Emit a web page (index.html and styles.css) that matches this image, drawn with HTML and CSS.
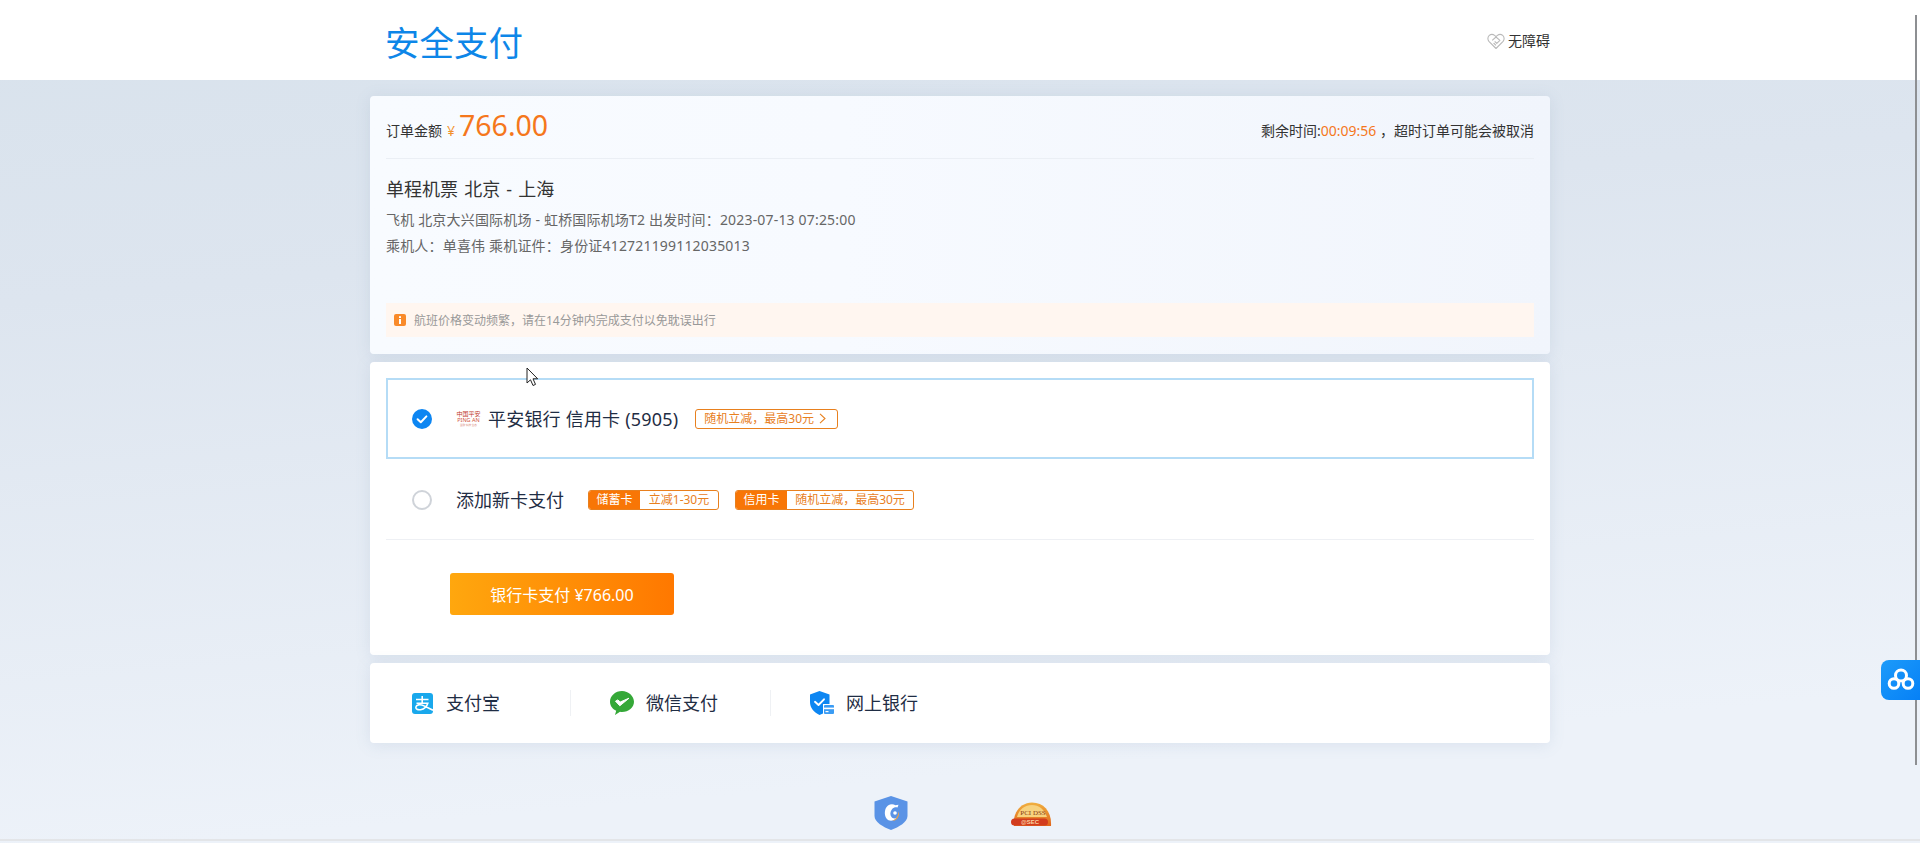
FILE: index.html
```html
<!DOCTYPE html>
<html lang="zh-CN">
<head>
<meta charset="utf-8">
<title>安全支付</title>
<link rel="stylesheet" href="styles.css">
</head>
<body>
<header class="top">
  <div class="top-inner">
    <h1 class="brand">安全支付</h1>
    <a class="a11y">
      <svg class="a11y-icon" viewBox="0 0 18 18" fill="none" stroke="#b9b9b9" stroke-width="1.1" stroke-linejoin="round">
        <path d="M9 16.5 1.9 9.3C.4 7.6.6 4.9 2.3 3.4 4 2 6.2 2.3 7.6 3.4L9 4.6l1.4-1.2c1.4-1.1 3.6-1.4 5.3 0 1.7 1.5 1.9 4.2.4 5.900L9 16.5Z"/>
        <path d="M5.2 8.3 9 5l3.9 3.3-3.1 3-2.1-2"/>
        <path d="M9 13.4 6.6 11"/>
      </svg>
      <span>无障碍</span>
    </a>
  </div>
</header>

<main class="main">
  <section class="card order">
    <div class="order-head">
      <div class="amount">
        <span class="amount-label">订单金额</span>
        <span class="amount-yen">¥</span>
        <span class="amount-num">766.00</span>
      </div>
      <div class="timer">剩余时间:<span class="timer-num">00:09:56</span> ，超时订单可能会被取消</div>
    </div>
    <div class="order-body">
      <h2 class="order-title">单程机票 北京 - 上海</h2>
      <p class="order-line">飞机 北京大兴国际机场 - 虹桥国际机场T2 出发时间：2023-07-13 07:25:00</p>
      <p class="order-line">乘机人：单喜伟 乘机证件：身份证412721199112035013</p>
    </div>
    <div class="notice">
      <svg class="notice-icon" viewBox="0 0 12 12">
        <rect width="12" height="12" rx="2" fill="#f98a2a"/>
        <rect x="5" y="2.2" width="2" height="1.8" fill="#fff"/>
        <rect x="5" y="5" width="2" height="5" fill="#fff"/>
      </svg>
      <span>航班价格变动频繁，请在14分钟内完成支付以免耽误出行</span>
    </div>
  </section>

  <section class="card pay">
    <div class="pay-row selected">
      <svg class="radio" viewBox="0 0 20 20">
        <circle cx="10" cy="10" r="10" fill="#0d86f2"/>
        <path d="M5.6 10.2 8.8 13.2 14.4 7.4" fill="none" stroke="#fff" stroke-width="2" stroke-linecap="round" stroke-linejoin="round"/>
      </svg>
      <svg class="bank-logo" viewBox="0 0 25 16">
        <text x="12.5" y="5.4" text-anchor="middle" class="logo-cn">中国平安</text>
        <text x="12.5" y="11" text-anchor="middle" class="logo-en">PING AN</text>
        <text x="12.5" y="15" text-anchor="middle" class="logo-sub">金融·科技·生态</text>
      </svg>
      <span class="pay-name pay-name-card">平安银行 信用卡 (5905)</span>
      <span class="tag tag-link">随机立减，最高30元
        <svg class="chev" viewBox="0 0 7 11"><path d="M1 .8 6 5.500 1 10.200" fill="none" stroke="#e8801e" stroke-width="1.100"/></svg>
      </span>
    </div>
    <div class="pay-row add">
      <span class="radio-empty"></span>
      <span class="pay-name">添加新卡支付</span>
      <span class="tag tag-pair"><b class="tag-fill tag-fill-a">储蓄卡</b><span class="tag-text tag-text-a">立减1-30元</span></span>
      <span class="tag tag-pair"><b class="tag-fill tag-fill-b">信用卡</b><span class="tag-text tag-text-b">随机立减，最高30元</span></span>
    </div>
    <div class="pay-action">
      <button class="pay-btn">银行卡支付 ¥766.00</button>
    </div>
  </section>

  <section class="card methods">
    <div class="method first">
      <svg class="m-icon" viewBox="0 0 21 21">
        <rect width="21" height="21" rx="3" fill="#19a8ec"/>
        <path d="M4 6.500H16.500M10.200 3V10M4.500 10.200H15.800C14.800 13.500 12 16 8.600 16.700 5.600 17.200 3.700 16 3.900 14.200 4.200 11.700 8 11 12 12.900L21 17.200" fill="none" stroke="#fff" stroke-width="1.600"/>
      </svg>
      <span>支付宝</span>
    </div>
    <span class="sep"></span>
    <div class="method">
      <svg class="m-icon" viewBox="0 0 24 24">
        <path d="M12 0C5.400 0 0 4.800 0 10.800c0 4 2.500 7.300 6.200 9L5 24l5-3.200c.7.100 1.300.200 2 .200 6.600 0 12-4.700 12-10.200S18.600 0 12 0Z" fill="#35a838"/>
        <path d="M5.500 10.200 9.800 14.800 19 7.200 10.200 11 7.800 8.900Z" fill="#fff" stroke="#fff" stroke-width="1" stroke-linejoin="round"/>
      </svg>
      <span>微信支付</span>
    </div>
    <span class="sep"></span>
    <div class="method">
      <svg class="m-icon" viewBox="0 0 24 24">
        <path d="M9.500 0 19.500 3.500V13H13V22.500L9.500 24C3.500 21 0 16.500 0 11V3.500Z" fill="#0d86f2"/>
        <path d="M5 10.800 8.500 14 14 8.300" fill="none" stroke="#fff" stroke-width="1.900" stroke-linecap="round" stroke-linejoin="round"/>
        <rect x="13" y="13" width="11" height="10" fill="#fff"/>
        <rect x="14" y="14" width="10" height="9" rx="1" fill="#3b9cf4"/>
        <rect x="14" y="16.600" width="10" height="1.600" fill="#fff"/>
        <rect x="15.500" y="20" width="3" height="1.200" fill="#fff"/>
      </svg>
      <span>网上银行</span>
    </div>
  </section>
</main>

<footer class="foot">
  <svg class="foot-shield" viewBox="0 0 34 34">
    <path d="M17 0 33.500 5.500V20C33.500 26 25 31 17 34 9 31 .5 26 .5 20V5.500Z" fill="#5a93e6"/>
    <path d="M14 9.500C16.500 8 19 8 21.500 9.200L24.500 8.800 23.500 11.500C21.500 11 19.500 11.500 18 13.200 16 15.500 15.800 19 17.500 21 19 22.800 21 22.800 22.500 21.500 20 25.500 15 25.800 12.500 22.500 9.800 19 10.500 12 14 9.500Z" fill="#fff"/>
    <path d="M24.800 15.500C26 20.500 22.500 25.500 17.500 25 21.500 24.500 24 20.500 24.800 15.500Z" fill="#f2a13c"/>
    <circle cx="21" cy="17" r="1.800" fill="#fff"/>
  </svg>
  <svg class="foot-pci" viewBox="0 0 41 25">
    <defs>
      <linearGradient id="pciBg" x1="0" y1="0" x2="0" y2="1">
        <stop offset="0" stop-color="#f0b040"/>
        <stop offset="1" stop-color="#e0651c"/>
      </linearGradient>
    </defs>
    <path d="M3 24C1 12 9 .5 21 .5 33 .5 41 10 40 24Z" fill="url(#pciBg)"/>
    <path d="M6 15C8 7 14 3 21 3 28 3 33 7 36 15Z" fill="#f7d27e"/>
    <text x="22" y="12.500" text-anchor="middle" class="pci-a">PCI DSS</text>
    <rect x="0" y="16.500" width="37" height="7" rx="3.500" fill="#d23c1e"/>
    <text x="19" y="22.300" text-anchor="middle" class="pci-b">@SEC</text>
  </svg>
</footer>

<div class="scroll-thumb"></div>
<div class="side-btn">
  <svg viewBox="0 0 28 24" fill="none" stroke="#fff" stroke-width="3">
    <circle cx="14" cy="7.500" r="5.500"/>
    <circle cx="7" cy="15.500" r="4.800"/>
    <circle cx="21" cy="15.500" r="4.800"/>
  </svg>
</div>
<svg class="cursor" viewBox="0 0 13 20">
  <path d="M1 1V16L4.500 12.800 7 18.500 9.500 17.400 7 11.800H11.700Z" fill="#fff" stroke="#222" stroke-width="1"/>
</svg>
</body>
</html>
```

FILE: styles.css
```css
* { box-sizing: border-box; }
html, body { margin: 0; padding: 0; height: 843px; overflow: hidden; }
body {
  position: relative;
  font-family: "Noto Sans", "Noto Sans CJK SC", sans-serif;
  color: #333;
  background: linear-gradient(175deg, #d8e2ec 0%, #dde5ef 30%, #edf2f9 85%);
}

.top { height: 80px; background: #fff; }
.top-inner {
  width: 1180px;
  margin: 0 auto;
  padding: 0 0 0 15px;
  height: 100%;
  display: flex;
  align-items: center;
  justify-content: space-between;
}
.brand { margin: 6px 0 0; font-size: 34.500px; line-height: 44px; font-weight: 400; color: #0d86e8; }
.a11y { display: flex; align-items: center; gap: 3px; font-size: 14px; line-height: 20px; color: #333; margin-top: 1px; }
.a11y-icon { width: 18px; height: 18px; }

.main { width: 1180px; margin: 0 auto; padding-top: 16px; display: flex; flex-direction: column; gap: 8px; }
.card { border-radius: 4px; background: #fff; box-shadow: 0 2px 16px rgba(90, 120, 160, .13); }

.order {
  height: 258px;
  padding: 0 16px;
  background: linear-gradient(90deg, #f8fbff 0%, #f7faff 40%, #f1f5fc 100%);
  display: flex;
  flex-direction: column;
}
.order-head {
  height: 63px;
  flex: none;
  display: flex;
  justify-content: space-between;
  align-items: flex-end;
  padding-bottom: 17px;
  border-bottom: 1px solid #ebeff5;
}
.amount { display: flex; align-items: baseline; }
.amount-label { font-size: 14px; line-height: 20px; }
.amount-yen { font-size: 14px; color: #f2902a; margin: 0 4px 0 5px; line-height: 20px; }
.amount-num { font-size: 28.500px; line-height: 32px; color: #f5771c; }
.timer { font-size: 14px; line-height: 20px; color: #333; }
.timer-num { color: #f5771c; }
.order-body { flex: 1; padding-top: 18px; }
.order-title { margin: 0 0 6px; font-size: 18px; word-spacing: 1.500px; line-height: 24px; font-weight: 400; color: #333; }
.order-line { margin: 0; font-size: 14px; line-height: 26px; color: #666; letter-spacing: .18px; }
.notice {
  flex: none;
  height: 34px;
  margin-bottom: 17px;
  padding: 0 8px;
  display: flex;
  align-items: center;
  gap: 8px;
  background: #fff6f0;
  font-size: 12px;
  color: #999;
}
.notice-icon { width: 12px; height: 12px; }

.pay { height: 293px; padding: 16px 16px 0; }
.pay-row { display: flex; align-items: center; height: 81px; padding-left: 26px; }
.selected { border: 2px solid #b5dcf6; padding-left: 24px; }
.add { height: 79px; margin-top: 2px; border-bottom: 1px solid #eef0f4; }
.radio { width: 20px; height: 20px; flex: none; }
.radio-empty { width: 20px; height: 20px; flex: none; border-radius: 50%; border: 2px solid #cfd3d9; background: #fff; margin-right: 24px; }
.bank-logo { width: 25px; height: 16px; margin: 0 7px 0 24px; flex: none; }
.logo-cn { font-size: 6px; fill: #c0392b; }
.logo-en { font-size: 5.500px; fill: #d0553f; }
.logo-sub { font-size: 2.600px; fill: #d98a7c; }
.pay-name { font-size: 18px; line-height: 24px; color: #1f2d44; }
.pay-name-card { letter-spacing: .2px; }
.tag { font-size: 12px; line-height: 18px; color: #e8801e; border: 1px solid #e8801e; border-radius: 3px; height: 20px; white-space: nowrap; background: #fff; }
.tag-link { display: inline-flex; align-items: center; margin-left: 17px; padding: 0 8px; width: 143px; gap: 5px; }
.chev { width: 7px; height: 11px; }
.tag-pair { display: inline-flex; margin-left: 24px; overflow: hidden; }
.tag-pair + .tag-pair { margin-left: 16px; }
.tag-fill { background: #f87606; color: #fff; font-weight: 400; text-align: center; flex: none; }
.tag-fill-a { width: 51px; }
.tag-fill-b { width: 51px; }
.tag-text { text-align: center; flex: none; }
.tag-text-a { width: 78px; }
.tag-text-b { width: 126px; }

.pay-action { padding: 33px 0 0 64px; }
.pay-btn {
  display: block;
  width: 224px;
  height: 42px;
  border: 0;
  border-radius: 3px;
  padding: 0;
  color: #fff;
  font: inherit;
  font-size: 16px;
  background: linear-gradient(90deg, #ffa70e, #ff7800);
}

.methods { height: 80px; display: flex; align-items: center; padding-left: 42px; }
.method { display: flex; align-items: center; gap: 12px; font-size: 18px; line-height: 24px; color: #1f2d44; width: 199px; padding-left: 39px; }
.method.first { width: 158px; padding-left: 0; gap: 13px; }
.sep { width: 1px; height: 26px; background: #eff1f4; flex: none; }
.m-icon { width: 24px; height: 24px; flex: none; }
.first .m-icon { width: 21px; height: 21px; }

.foot {
  height: 98px;
  display: flex;
  justify-content: center;
  align-items: flex-start;
  gap: 103px;
  padding: 53px 0 0 5px;
  border-bottom: 2px solid #e3e5e8;
}
.foot-shield { width: 34px; height: 34px; }
.foot-pci { width: 41px; height: 25px; margin-top: 6px; }
.pci-a { font-family: "Liberation Serif", serif; font-size: 7px; fill: #8a3a10; }
.pci-b { font-family: "Liberation Sans", sans-serif; font-size: 6px; font-weight: 700; fill: #fbd3a0; }

.scroll-thumb { position: absolute; top: 15px; left: 1915px; width: 2px; height: 750px; background: #8d8f92; }
.side-btn {
  position: absolute;
  top: 660px;
  left: 1881px;
  width: 39px;
  height: 40px;
  border-radius: 8px 0 0 8px;
  background: linear-gradient(135deg, #1c9bfa, #0680f6);
  display: flex;
  align-items: center;
  justify-content: center;
}
.side-btn svg { width: 28px; height: 24px; }
.cursor { position: absolute; top: 367px; left: 526px; width: 13px; height: 20px; }
```
